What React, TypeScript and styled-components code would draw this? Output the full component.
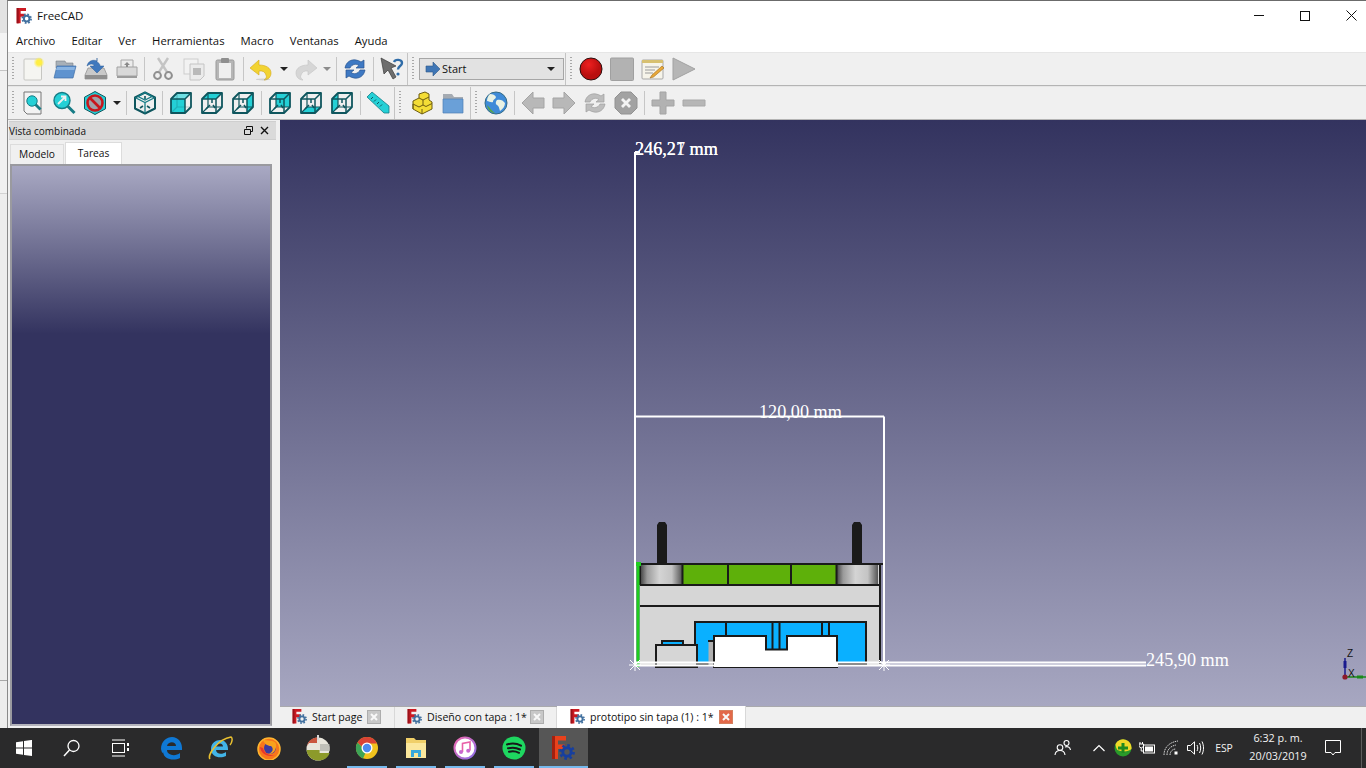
import React from "react";
import styled, { createGlobalStyle } from "styled-components";

const Global = createGlobalStyle`
  html, body { margin: 0; padding: 0; background: #f0f0f0; overflow: hidden; }
  * { box-sizing: border-box; }
  svg { flex: none; }
`;
const UI = `"Open Sans", "Noto Sans", "Liberation Sans", sans-serif`;

const Root = styled.div`
  width: 1366px; height: 768px; display: flex; flex-direction: column; overflow: hidden;
  font-family: ${UI}; font-size: 11px; color: #000;
`;
const Desk = styled.div`display: flex; flex: 1; min-height: 0;`;
const Sliver = styled.div`
  width: 7px; flex: none;
  background: linear-gradient(#e3e3e3 0 33px, #f4f4f4 33px 70px, #c4c4c4 70px 71px, #f0f0f0 71px 193px, #d2d2d2 193px 194px, #ededed 194px 680px, #a8a8a8 680px 681px, #ededed 681px);
`;
const Win = styled.div`
  flex: 1; min-width: 0; display: flex; flex-direction: column; background: #fff;
  border-top: 1px solid #6b6b6b; border-left: 1px solid #8a8a8a;
`;
const TitleBar = styled.div`height: 29px; flex: none; display: flex; align-items: center; padding-left: 8px; gap: 5px;`;
const TitleText = styled.span`font-size: 11.5px; color: #111; flex: 1;`;
const WinButtons = styled.div`display: flex; margin-right: -8px; align-self: flex-start;`;
const WinButton = styled.div`width: 46px; height: 29px; display: flex; align-items: center; justify-content: center;`;
const MenuBar = styled.div`
  height: 22px; flex: none; display: flex; align-items: center; gap: 16px; padding: 0 0 2px 8px;
  font-size: 11.3px; color: #111;
`;
const ToolRow = styled.div`
  height: 34px; flex: none; display: flex; align-items: stretch; background: #f0f0f0;
  border-top: 1px solid #e6e6e6; border-bottom: 1px solid #b4b4b4;
`;
const ToolGroup = styled.div<{ $end?: boolean; $pad?: number }>`
  display: flex; align-items: center; padding-right: ${p => p.$pad ?? 0}px;
  ${p => p.$end ? "border-right: 1px solid #c4c4c4;" : ""}
`;
const Handle = styled.div<{ $w?: number }>`
  width: ${p => p.$w ?? 10}px; height: 24px; flex: none;
  background: repeating-linear-gradient(#a8a8a8 0 1px, transparent 1px 3px) center / 2px 100% no-repeat;
`;
const Tool = styled.div<{ $w?: number }>`
  width: ${p => p.$w ?? 31}px; height: 26px; flex: none; display: flex; align-items: center; justify-content: center;
`;
const Sep = styled.div<{ $w?: number }>`
  width: ${p => p.$w ?? 6}px; height: 24px; flex: none; position: relative; display: flex; justify-content: center;
  &::after { content: ""; width: 1px; height: 100%; background: #c6c6c6; }
`;
const Caret = styled.div<{ $off?: boolean }>`
  width: 0; height: 0; border-left: 4px solid transparent; border-right: 4px solid transparent;
  border-top: 4px solid ${p => p.$off ? "#8c8c8c" : "#222"};
`;
const Combo = styled.div`
  width: 145px; height: 22px; flex: none; margin: 0 1px; background: #e2e2e2; border: 1px solid #a6a6a6;
  display: flex; align-items: center; padding: 0 8px 1px 5px; gap: 1px; font-size: 11px; color: #111;
`;
const ComboLabel = styled.span`flex: 1;`;
const Main = styled.div`flex: 1; min-height: 0; display: flex;`;
const Panel = styled.div`width: 272px; flex: none; display: flex; flex-direction: column; background: #f0f0f0;`;
const DockTitle = styled.div`
  height: 19px; flex: none; margin: 1px 4px 0 1px; background: #dadada; border-top: 1px solid #cfcfcf; border-bottom: 1px solid #cfcfcf;
  display: flex; align-items: center; font-size: 10px; color: #111; padding-right: 4px;
`;
const DockLabel = styled.span`flex: 1;`;
const DockIcon = styled.div`width: 16px; height: 14px; display: flex; align-items: center; justify-content: center;`;
const PanelTabs = styled.div`height: 22px; flex: none; margin: 2px 8px 0 2px; display: flex; align-items: flex-end;`;
const PanelTab = styled.div<{ $on?: boolean }>`
  height: ${p => p.$on ? 22 : 20}px; width: ${p => p.$on ? 57 : 54}px; display: flex; align-items: center; justify-content: center;
  background: ${p => p.$on ? "#fff" : "#f0f0f0"}; font-size: 10.2px; color: #111; padding-bottom: 2px;
  margin-left: ${p => p.$on ? 1 : 0}px;
  border: 1px solid #dcdcdc; border-bottom: none;
`;
const TaskPane = styled.div`
  flex: 1; margin: 0 8px 2px 2px; border: 2px solid #9a9a9f; border-bottom-color: #b4b4bc;
  background: linear-gradient(#a9a9c3 0, #33335f 168px);
`;
const RightCol = styled.div`flex: 1; min-width: 0; display: flex; flex-direction: column;`;
const Viewport = styled.div`
  flex: 1; position: relative; overflow: hidden; background: linear-gradient(#33335f, #a7a7c1);
`;
const Drawing = styled.svg`position: absolute; left: 0; top: 0;`;
const Dim = styled.span<{ $x: number; $y: number }>`
  position: absolute; left: ${p => p.$x - 280}px; top: ${p => p.$y - 120}px; white-space: nowrap;
  font-family: "Liberation Serif", serif; font-size: 18.2px; line-height: 20px; color: #fff;
`;
const AxisLetter = styled.span<{ $x: number; $y: number }>`
  position: absolute; left: ${p => p.$x - 280}px; top: ${p => p.$y - 120}px;
  font-family: "Liberation Sans", sans-serif; font-size: 10px; line-height: 10px; color: #111;
`;
const DocTabs = styled.div`
  height: 22px; flex: none; display: flex; padding-left: 2px; background: #f0f0f0; border-top: 1px solid #a9a9ad;
`;
const DocTab = styled.div<{ $w: number; $pl: number; $on?: boolean }>`
  width: ${p => p.$w}px; display: flex; align-items: center; gap: 5px; padding: 0 0 ${p => p.$on ? 1 : 2}px ${p => p.$pl}px;
  margin-top: ${p => p.$on ? -1 : 0}px; font-size: 10.6px; color: #111;
  background: ${p => p.$on ? "#fff" : "#f0f0f0"}; border-right: 1px solid #d8d8d8;
`;
const DocLabel = styled.span`white-space: nowrap; flex: 1; min-width: 0;`;
const DocClose = styled.div<{ $on?: boolean; $mr: number }>`
  width: 14px; height: 14px; flex: none; margin-right: ${p => p.$mr}px;
  display: flex; align-items: center; justify-content: center;
  background: ${p => p.$on ? "#e2694a" : "#c8c8c8"}; border: 1px solid ${p => p.$on ? "#d6805f" : "#adadad"};
`;
const Taskbar = styled.div`height: 40px; flex: none; display: flex; background: #2a2a2b; color: #f2f2f2;`;
const TaskBtn = styled.div<{ $w?: number; $active?: boolean; $bar?: number }>`
  width: ${p => p.$w ?? 49}px; height: 40px; flex: none; display: flex; align-items: center; justify-content: center; position: relative;
  background: ${p => p.$active ? "#565656" : "transparent"};
  ${p => p.$bar ? `&::after { content: ""; position: absolute; bottom: 0; left: ${(49 - p.$bar) / 2}px; width: ${p.$bar}px; height: 2px; background: #76b9ed; }` : ""}
`;
const TaskGap = styled.div`width: 2.5px; flex: none;`;
const Tray = styled.div`margin-left: auto; display: flex; align-items: center; height: 40px;`;
const TrayItem = styled.div<{ $w?: number }>`
  width: ${p => p.$w ?? 24}px; height: 40px; flex: none; display: flex; align-items: center; justify-content: center;
`;
const TraySpace = styled.div`width: 12px;`;
const Lang = styled(TrayItem)`font-size: 10.4px;`;
const Clock = styled(TrayItem)`flex-direction: column; font-size: 10.8px; line-height: 18px; padding-bottom: 2px;`;
const DesktopEdge = styled.div`width: 5px; height: 40px; margin-left: 10px; border-left: 1px solid #5c5c5c;`;

type IconProps = { s?: number; children: React.ReactNode };
const I = ({ s = 24, children }: IconProps) => (
  <svg width={s} height={s} viewBox="0 0 24 24" fill="none">{children}</svg>
);

const Logo = ({ s = 16, hot }: { s?: number; hot?: boolean }) => {
  const gear = hot ? "#173f9e" : "#41709f";
  return (
    <I s={s}>
      <path d="M1 0h14v4.500H7v4h7V13H7v10H1z" fill={hot ? "#e8421c" : "#cc1a22"} />
      <path d="M1 0h3v23H1z" fill={hot ? "#a3200f" : "#98121a"} />
      <circle cx="16" cy="16" r="4.200" stroke={gear} strokeWidth="3" />
      <circle cx="16" cy="16" r="6.600" stroke={gear} strokeWidth="2.600" strokeDasharray="2.600 2.600" />
    </I>
  );
};

const NewDoc = () => (
  <I>
    <defs><radialGradient id="glow"><stop offset=".45" stopColor="#ffee44" /><stop offset="1" stopColor="#ffee44" stopOpacity="0" /></radialGradient></defs>
    <rect x="2" y="2" width="17.500" height="21" rx="1" fill="#f5f5f1" stroke="#c6c6c2" />
    <circle cx="17" cy="5.500" r="5.500" fill="url(#glow)" />
  </I>
);
const OpenFolder = () => (
  <I>
    <path d="M3 4h9l1 2h7v5H3z" fill="#a8b0b8" stroke="#7a8088" strokeWidth=".6" />
    <path d="M4 9h19l-3 12H1z" fill="#5f93cf" stroke="#3f6ea6" strokeWidth=".7" />
    <path d="M4 10h18l-.6 3H3z" fill="#8ab4e2" />
  </I>
);
const SaveDisk = () => (
  <I>
    <path d="M4 11h16l3 7v4H1v-4z" fill="#c9c9c9" stroke="#8b8b8b" strokeWidth=".7" />
    <path d="M1 18h22v4H1z" fill="#8f8f8f" />
    <path d="M3 9c1-5 6-7 10-5v-3l0 0 0 4c2 1 3 2 3 4h4l-7 7-7-7h4c0-2-3-3-7 0z" fill="#3f78bd" stroke="#2c5c98" strokeWidth=".5" />
  </I>
);
const Printer = () => (
  <I>
    <path d="M6 3h12v8H6z" fill="#ececec" stroke="#a8a8a8" />
    <path d="M2 10h20v9H2z" fill="#d9d9d9" stroke="#a2a2a2" />
    <path d="M2 19h20v2H2z" fill="#9c9c9c" />
    <path d="M12 5l3 3h-2v2h-2V8H9z" fill="#8a8a8a" />
  </I>
);
const Cut = () => (
  <I>
    <path d="M7 1l9 14M17 1L8 15" stroke="#c4c4c4" strokeWidth="2.400" />
    <circle cx="6.500" cy="18.500" r="3.400" stroke="#8f8f8f" strokeWidth="2" />
    <circle cx="17.500" cy="18.500" r="3.400" stroke="#8f8f8f" strokeWidth="2" />
  </I>
);
const Copy = () => (
  <I>
    <rect x="2" y="2" width="14" height="15" fill="#f2f2f2" stroke="#cdcdcd" />
    <path d="M8 7h14v12l-4 4H8z" fill="#ebebeb" stroke="#c4c4c4" />
    <rect x="11" y="11" width="8" height="7" fill="#b9b9b9" />
  </I>
);
const Paste = () => (
  <I>
    <rect x="3" y="3" width="18" height="20" rx="1.500" fill="#b6b6b6" stroke="#9a9a9a" />
    <rect x="6" y="6" width="12" height="15" fill="#efefef" />
    <rect x="8" y="1" width="8" height="5" rx="1" fill="#8f8f8f" />
  </I>
);
const Undo = () => (
  <I>
    <path d="M10 3L1 11l9 7v-4c4-.5 6 1 7 4 1 2 0 4-2 5 4 0 7-3 7-7 0-5-5-8-12-8z" fill="#f2d332" stroke="#d4a818" strokeWidth=".6" />
    <ellipse cx="14" cy="22.400" rx="7" ry="1" fill="#999" opacity=".35" />
  </I>
);
const Redo = () => (
  <svg width="24" height="24" viewBox="0 0 24 24" fill="none">
    <g transform="translate(24 0) scale(-1 1)">
      <path d="M10 3L1 11l9 7v-4c4-.5 6 1 7 4 1 2 0 4-2 5 4 0 7-3 7-7 0-5-5-8-12-8z" fill="#d6d6d6" stroke="#c2c2c2" strokeWidth=".6" />
    </g>
  </svg>
);
const Refresh = ({ off }: { off?: boolean }) => {
  const a = off ? "#bdbdbd" : "#3e79c3";
  const e = off ? "#9d9d9d" : "#28558f";
  return (
    <I>
      <path d="M2 11C3 5 8 2 13 3c2 .3 3.500 1 5 2l3-2v8h-8l3-2.500c-3-2-7-1.500-9 2.500z" fill={a} stroke={e} strokeWidth=".7" />
      <path d="M22 13c-1 6-6 9-11 8-2-.3-3.500-1-5-2l-3 2v-8h8l-3 2.500c3 2 7 1.500 9-2.500z" fill={a} stroke={e} strokeWidth=".7" />
    </I>
  );
};
const WhatsThis = () => (
  <I>
    <path d="M1 1l15 8-5 2 5 9-3 2-5-9-4 4z" fill="#6d6d6d" stroke="#3b3b3b" strokeWidth=".7" />
    <path d="M14 5c1-3 8-3 8 1 0 3-4 3-4 6.500" stroke="#2f6ca8" strokeWidth="2.400" />
    <circle cx="18" cy="17" r="1.600" fill="#2f6ca8" />
  </I>
);
const StartArrow = () => (
  <svg width="16" height="14" viewBox="0 0 16 14"><path d="M1 4h7V0l7 7-7 7v-4H1z" fill="#3f76b5" stroke="#2d5787" strokeWidth=".6" /></svg>
);
const Record = () => (
  <I>
    <defs><radialGradient id="rec" cx=".4" cy=".3"><stop offset="0" stopColor="#ee2020" /><stop offset="1" stopColor="#b90f0f" /></radialGradient></defs>
    <circle cx="12" cy="12" r="11" fill="url(#rec)" stroke="#2a1010" />
  </I>
);
const Stop = () => <I><rect x=".5" y="1" width="23" height="22.500" rx="1" fill="#b2b2b2" stroke="#a0a0a0" /></I>;
const MacroNote = () => (
  <I>
    <rect x="1" y="3" width="21" height="19" rx="1" fill="#f6f4ea" stroke="#a8a8a8" />
    <path d="M1 3h21v3H1z" fill="#d7c070" />
    <path d="M4 10h14M4 13h10M4 16h8" stroke="#9a9a9a" />
    <path d="M21 9L11 18l-2 3 3.500-1L23 11z" fill="#e8a838" stroke="#a06a18" strokeWidth=".6" />
  </I>
);
const Play = () => <I><path d="M1 1l22 11L1 23z" fill="#b6b6b6" stroke="#a2a2a2" /></I>;

const teal = "#24d0d6"; const dark = "#0f565e";
const FitAll = () => (
  <I>
    <path d="M3 1h17v22H6l-3-3z" fill="#f3f3f3" stroke="#777" />
    <circle cx="11" cy="10" r="5.200" fill={teal} stroke="#167c86" />
    <path d="M14.500 13.500l5 5" stroke="#167c86" strokeWidth="2.800" />
  </I>
);
const FitSel = () => (
  <I>
    <circle cx="10" cy="9.500" r="8" fill={teal} stroke="#167c86" strokeWidth="1.400" />
    <path d="M6 13l7-7M9 5.500h4.500V10" stroke="#efefef" strokeWidth="1.800" />
    <path d="M15.500 15l7 7" stroke="#167c86" strokeWidth="3" />
  </I>
);
const NoDraw = () => (
  <I>
    <path d="M12 .5l10.500 5.700v11.600L12 23.500 1.500 17.800V6.200z" fill={teal} stroke={dark} />
    <circle cx="12" cy="12" r="7.500" fill="#9fa2a8" stroke="#c8161c" strokeWidth="2.600" />
    <path d="M7 7l10 10" stroke="#c8161c" strokeWidth="2.600" />
  </I>
);
const front = "M2 8h14v14H2z", topF = "M2 8l6-6h14l-6 6z", rightF = "M16 8l6-6v14l-6 6z";
const backF = "M8 2h14v14H8z", botF = "M2 22l6-6h14l-6 6z", leftF = "M2 8l6-6v14l-6 6z";
type CubeFace = "front" | "top" | "right" | "rear" | "bottom" | "left";
const Cube = ({ face }: { face: CubeFace }) => {
  const d = { front, top: topF, right: rightF, rear: backF, bottom: botF, left: leftF }[face];
  const solidFront = face === "front";
  return (
    <I>
      <path d={d} fill={teal} />
      {solidFront && <path d={topF} fill="#6fe0e4" />}
      <path d="M2 8l6-6h14v14l-6 6H2z" stroke={dark} strokeWidth="1.800" strokeLinejoin="round" />
      <path d="M2 8h14v14M16 8l6-6" stroke={dark} strokeWidth="1.500" />
      <path d="M8 2v14h14M8 16l-6 6" stroke={dark} strokeWidth="1.200" opacity={solidFront ? .25 : 1} />
      {!solidFront && <path d="M6 18l4-4M13 14l2 3M12 8v4" stroke={dark} strokeWidth="1.500" />}
    </I>
  );
};
const IsoCube = () => (
  <I>
    <path d="M12 1.500l10 5v11l-10 5-10-5v-11z" stroke={dark} strokeWidth="2" strokeLinejoin="round" />
    <path d="M2 6.500l10 5 10-5M12 11.500v11M12 1.500l-7 4 7 3.500 7-3.500z" stroke="#167c86" strokeWidth="1.300" />
    <path d="M7 17l3-2M17 17l-3-2M12 5v3" stroke={dark} strokeWidth="1.600" />
  </I>
);
const Measure = () => (
  <I>
    <path d="M1 6l5-5 17 14v7l-5 0z" fill={teal} stroke="#167c86" strokeWidth=".8" />
    <path d="M7 6l-2 2M10 8.500l-2 2M13 11l-2 2M16 13.500l-2 2" stroke="#0f565e" />
  </I>
);
const PartBlocks = () => (
  <I>
    <path d="M3 10l6-3V3l6-2 4 2v6l3 2v7l-10 5-9-5z" fill="#f4dd36" stroke="#6d5c10" strokeWidth="1" strokeLinejoin="round" />
    <path d="M9 7l4 2 6-3M13 9v5l-4 2-6-3M13 14l3 1.500 6-3M12 23v-5M3 13v5" stroke="#6d5c10" strokeWidth="1" />
  </I>
);
const BlueFolder = () => (
  <I>
    <path d="M2 3h9l2 3h9v16H2z" fill="#a5abb2" />
    <path d="M2 8h20v14H2z" fill="#6aa0d8" stroke="#4f7fb4" strokeWidth=".7" />
  </I>
);
const Globe = () => (
  <I>
    <circle cx="12" cy="12" r="11" fill="#3f8bd8" stroke="#346b84" />
    <path d="M6 3c3 0 5 1 6 3-1 3-3 2-3 5-2 1-4-1-6-1 0-3 1-5 3-7zM13 9c3-1 6 0 8 3 0 3-2 6-5 8-1-3-1-5-3-6-2-1-1-4 0-5z" fill="#e9f2e4" />
    <path d="M3 14c3 3 4 5 8 8-4 0-7-3-8-8z" fill="#58a844" />
  </I>
);
const ArrowGrey = ({ flip }: { flip?: boolean }) => (
  <I>
    <path d={flip ? "M23 12L12 1v6H1v10h11v6z" : "M1 12L12 1v6h11v10H12v6z"} fill="#b8b8b8" stroke="#a4a4a4" />
  </I>
);
const StopOct = () => (
  <I>
    <path d="M7 1h10l6 6v10l-6 6H7l-6-6V7z" fill="#a2a2a2" stroke="#929292" />
    <path d="M8 8l8 8M16 8l-8 8" stroke="#f4f4f4" strokeWidth="2.800" />
  </I>
);
const Plus = () => <I><path d="M9 1h6v8h8v6h-8v8H9v-8H1V9h8z" fill="#b2b2b2" stroke="#a4a4a4" /></I>;
const Minus = () => <I><path d="M1 9h22v6H1z" fill="#b6b6b6" stroke="#a8a8a8" /></I>;

const SmallX = ({ c = "#f8f8f8" }: { c?: string }) => (
  <svg width="8" height="8" viewBox="0 0 8 8"><path d="M1 1l6 6M7 1L1 7" stroke={c} strokeWidth="2" /></svg>
);

const Windows = () => (
  <svg width="16" height="16" viewBox="0 0 16 16"><path d="M0 2.200L7 1.200v6.300H0zM8 1l8-1.100v7.600H8zM0 8.500h7v6.300l-7-1zM8 8.500h8V16l-8-1.100z" fill="#fff" /></svg>
);
const Search = () => (
  <svg width="18" height="18" viewBox="0 0 18 18" fill="none"><circle cx="10.500" cy="7" r="5.500" stroke="#fff" strokeWidth="1.300" /><path d="M6.500 11L1 17" stroke="#fff" strokeWidth="1.500" /></svg>
);
const TaskView = () => (
  <svg width="18" height="18" viewBox="0 0 18 18" fill="none">
    <path d="M1 1h13M1 17h13" stroke="#fff" /><rect x="1.500" y="4.500" width="12" height="9" stroke="#fff" />
    <path d="M16 4h2v3h-2zM16 9h2v3h-2z" fill="#fff" />
  </svg>
);
const Edge = () => (
  <svg width="24" height="24" viewBox="0 0 24 24"><path d="M2 13C2 5 8 1 13 1c6 0 10 5 10 11v2H8c0 5 8 7 13 3v5c-6 3-16 2-17-6-.5 2-1 1-2-3zM8 10h9c0-5-8-5-9 0z" fill="#0f78d4" /></svg>
);
const IE = () => (
  <svg width="26" height="26" viewBox="0 0 26 26" fill="none">
    <path d="M4 14c0-6 5-9 9-9 5 0 8 4 8 9v1H9c0 4 6 5 10 2v4c-6 3-15 1-15-7zM9 11.500h7c0-4-6-4-7 0z" fill="#42b4e8" />
    <path d="M3 24C0 20 11 4 24 2c2 1 1 6-1 8" stroke="#e9c030" strokeWidth="1.500" />
  </svg>
);
const Firefox = () => (
  <svg width="24" height="24" viewBox="0 0 24 24">
    <circle cx="12" cy="13" r="11" fill="#f7761c" />
    <circle cx="12" cy="13" r="11" fill="none" stroke="#ffb52e" strokeWidth="1.500" />
    <circle cx="13" cy="12" r="6" fill="#3d3b9f" />
    <path d="M5 3c3 3 13 0 14 5 1 4-2 11-8 10 5-1 6-6 3-8-4 0-6-2-9-7z" fill="#f8a21c" />
    <path d="M3 11c1 7 8 11 15 8-6 1-11-2-12-7z" fill="#e8392c" />
  </svg>
);
const SketchBall = () => (
  <svg width="24" height="26" viewBox="0 0 24 26">
    <circle cx="12" cy="14" r="11.500" fill="#e8e6dc" />
    <path d="M.6 15h13v3h10c-1.500 5-6 7.500-11.600 7.500C6 25.500 1 21 .6 15z" fill="#8c9a2a" />
    <path d="M14 9h9.300c.4 2 .4 5 .2 7H14z" fill="#c0c0b8" />
    <path d="M1 11C2 6 6 3 11 2.500V8H3z" fill="#c43c22" opacity=".85" />
    <rect x="11" y="0" width="2" height="5" fill="#d8d8d8" />
  </svg>
);
const Chrome = () => (
  <svg width="24" height="24" viewBox="0 0 24 24">
    <circle cx="12" cy="12" r="11" fill="#f1c21d" />
    <path d="M2.500 6.500A11 11 0 0 1 22 7.500H12a5 5 0 0 0-5 3.500z" fill="#d94335" />
    <path d="M2.500 6.500L7 11a5 5 0 0 0 3.500 5.800L8 22.500A11 11 0 0 1 2.500 6.500z" fill="#3da457" />
    <circle cx="12" cy="12" r="5.500" fill="#fff" /><circle cx="12" cy="12" r="4.200" fill="#4b8bf0" />
  </svg>
);
const Explorer = () => (
  <svg width="24" height="24" viewBox="0 0 24 24">
    <path d="M2 2h8l2 2h10v18H2z" fill="#f0cf68" />
    <path d="M2 7h20v15H2z" fill="#fbe79c" />
    <path d="M7 14h10v7H7z" fill="#38a8dc" /><path d="M10 17h4v5h-4z" fill="#fbe79c" />
  </svg>
);
const Itunes = () => (
  <svg width="24" height="24" viewBox="0 0 24 24">
    <defs><linearGradient id="itn" x1="0" y1="0" x2="1" y2="1"><stop offset="0" stopColor="#f06ab0" /><stop offset="1" stopColor="#8a6fe8" /></linearGradient></defs>
    <circle cx="12" cy="12" r="10.500" fill="#fff" stroke="url(#itn)" strokeWidth="2" />
    <path d="M9.500 16V7.500L17 6v8.500" stroke="#e860a8" strokeWidth="1.600" fill="none" />
    <circle cx="8" cy="16" r="2" fill="#c868d0" /><circle cx="15.200" cy="14.700" r="2" fill="#c868d0" />
  </svg>
);
const Spotify = () => (
  <svg width="24" height="24" viewBox="0 0 24 24" fill="none">
    <circle cx="12" cy="12" r="11.500" fill="#1ed760" />
    <path d="M5 8.500c5-1.500 10-1 14 1.200M6 12.300c4-1 8.500-.7 12 1.200M7 15.800c3.500-.8 7-.5 10 1" stroke="#17181a" strokeWidth="2" strokeLinecap="round" />
  </svg>
);
const People = () => (
  <svg width="18" height="18" viewBox="0 0 18 18" fill="none" stroke="#fff" strokeWidth="1.100">
    <circle cx="6" cy="8.500" r="2.800" /><path d="M1 16c.3-3 2.300-4.500 5-4.500s4.700 1.500 5 4.500" />
    <circle cx="12.500" cy="4" r="2.500" /><path d="M11 8c2.500-1 5 0 5.500 3" />
  </svg>
);
const Chevron = () => (
  <svg width="12" height="8" viewBox="0 0 12 8" fill="none"><path d="M.5 7L6 1.500 11.500 7" stroke="#fff" strokeWidth="1.200" /></svg>
);
const GreenPlus = () => (
  <svg width="18" height="18" viewBox="0 0 18 18">
    <circle cx="9" cy="9" r="8.500" fill="#2a9a2a" /><path d="M1.500 5a8.500 8.500 0 0 1 16 5c-3 3-10 3-14 1-1-1-2-4-2-6z" fill="#f0d828" />
    <path d="M7.500 4h3v3.500H14v3h-3.500V14h-3v-3.500H4v-3h3.500z" fill="#1f8a1f" />
  </svg>
);
const Battery = () => (
  <svg width="17" height="12" viewBox="0 0 17 12" fill="none">
    <path d="M1 0v2M3.500 0v2M0 2h4.500v2.500L2.200 6 0 4.500z" stroke="#fff" /><path d="M2.200 6v3h2" stroke="#fff" />
    <rect x="4.500" y="3" width="11" height="8" stroke="#fff" /><rect x="6" y="4.500" width="8" height="5" fill="#fff" />
  </svg>
);
const Wifi = () => (
  <svg width="16" height="16" viewBox="0 0 16 16" fill="none" stroke="#d8d8d8">
    <path d="M1 15C1 7 7 2 15 1M4 15c0-6 4-9 9-10M7 15c0-3 2-6 6-6" strokeDasharray="1.500 .8" />
    <rect x="11.500" y="11.500" width="3" height="3" fill="#fff" stroke="none" />
  </svg>
);
const Volume = () => (
  <svg width="17" height="14" viewBox="0 0 17 14" fill="none" stroke="#fff">
    <path d="M.5 4.500h3L7.500.8v12.400L3.500 9.500h-3z" /><path d="M10 4c1 2 1 4 0 6M12.500 2c1.600 3 1.600 7 0 10M15 .5c2 4 2 9 0 13" />
  </svg>
);
const Notify = () => (
  <svg width="16" height="16" viewBox="0 0 16 16" fill="none"><path d="M.5.5h15v12H10L8 15l-2-2.500H.5z" stroke="#fff" /></svg>
);

const Model = () => (
  <Drawing width="1086" height="586" viewBox="280 120 1086 586">
    <defs>
      <linearGradient id="cyl">
        <stop offset="0" stopColor="#4a4a4a" /><stop offset=".15" stopColor="#9a9a9a" /><stop offset=".45" stopColor="#d4d4d4" />
        <stop offset=".75" stopColor="#c4c4c4" /><stop offset="1" stopColor="#555" />
      </linearGradient>
    </defs>
    <path d="M657 563v-38l2-3h6l2 3v38zM852 563v-38l2-3h6l2 3v38z" fill="#1a1a1a" />
    <rect x="640" y="564" width="241" height="102" fill="#d6d6d6" />
    <rect x="641" y="565" width="41" height="19" fill="url(#cyl)" />
    <rect x="837" y="565" width="41" height="19" fill="url(#cyl)" />
    <rect x="683" y="565" width="153" height="19" fill="#5eb00a" />
    <path d="M640 564h243M728 564v20M791 564v20M682.500 564v20M836.500 564v20M640 585h241M640 606h241M880 564v100M640 564v21" stroke="#1a1a1a" strokeWidth="2" />
    <path d="M695 664v-42h171v42z" fill="#0ab0ff" stroke="#1a1a1a" strokeWidth="2" />
    <path d="M726 622v14M772.500 622v28M779.500 622v28M822 622v14M829 622v14" stroke="#1a1a1a" strokeWidth="2" />
    <rect x="662" y="641" width="21" height="5" fill="#0ab0ff" stroke="#1a1a1a" strokeWidth="2" />
    <rect x="656" y="645" width="41" height="22" fill="#d6d6d6" stroke="#1a1a1a" strokeWidth="2" />
    <rect x="708.500" y="641" width="5" height="25" fill="#b0b0b0" />
    <path d="M708 641h6" stroke="#1a1a1a" strokeWidth="2" />
    <path d="M714 667V636h52v13.500h21V636h50v31z" fill="#fff" stroke="#1a1a1a" strokeWidth="2" />
    <path d="M638 565v102" stroke="#1fce1f" strokeWidth="3" />
    <rect x="636" y="562" width="5" height="4" fill="#1fce1f" />
    <path d="M635 152v513M635 152h5M635 416.500h249M884 416.500v249" stroke="#fff" strokeWidth="2" />
    <path d="M635 662.500h511M635 665.500h511" stroke="#fff" strokeWidth="2" />
    <rect x="714" y="662" width="124" height="5" fill="#fff" />
    <path d="M630 660l10 10M640 660l-10 10M635 659v12M629 665h12M879 660l10 10M889 660l-10 10M884 659v12M878 665h12" stroke="#fff" strokeWidth="1" />
    <path d="M1345 677v-19" stroke="#1a1a8e" strokeWidth="1.500" /><rect x="1343.500" y="661" width="3" height="7" fill="#1a1a8e" />
    <path d="M1345 677h21" stroke="#1a8a1a" strokeWidth="1.500" /><rect x="1357" y="675.500" width="6" height="3" fill="#1a8a1a" />
    <circle cx="1345" cy="677" r="2.600" fill="#8e1a2a" />
  </Drawing>
);

const App = () => (
  <Root>
    <Global />
    <Desk>
      <Sliver />
      <Win>
        <TitleBar>
          <Logo s={16} />
          <TitleText>FreeCAD</TitleText>
          <WinButtons>
            <WinButton><svg width="10" height="2"><rect width="10" height="1" fill="#111" /></svg></WinButton>
            <WinButton><svg width="10" height="10" fill="none"><rect x=".5" y=".5" width="9" height="9" stroke="#111" /></svg></WinButton>
            <WinButton><svg width="11" height="11" fill="none"><path d="M.5.500l10 10M10.500.5l-10 10" stroke="#111" /></svg></WinButton>
          </WinButtons>
        </TitleBar>
        <MenuBar>
          {["Archivo", "Editar", "Ver", "Herramientas", "Macro", "Ventanas", "Ayuda"].map(m => <span key={m}>{m}</span>)}
        </MenuBar>
        <ToolRow>
          <ToolGroup $end>
            <Handle />
            <Tool><NewDoc /></Tool><Tool><OpenFolder /></Tool><Tool><SaveDisk /></Tool><Tool><Printer /></Tool>
            <Sep $w={5.5} />
            <Tool><Cut /></Tool><Tool><Copy /></Tool><Tool><Paste /></Tool>
            <Sep $w={5} />
            <Tool><Undo /></Tool><Tool $w={14}><Caret /></Tool>
            <Tool><Redo /></Tool><Tool $w={11.5}><Caret $off /></Tool>
            <Sep />
            <Tool><Refresh /></Tool>
            <Sep />
            <Tool><WhatsThis /></Tool>
          </ToolGroup>
          <ToolGroup $end>
            <Handle />
            <Combo><StartArrow /><ComboLabel>Start</ComboLabel><Caret /></Combo>
          </ToolGroup>
          <ToolGroup>
            <Handle $w={9} />
            <Tool><Record /></Tool><Tool><Stop /></Tool><Tool><MacroNote /></Tool><Tool><Play /></Tool>
          </ToolGroup>
        </ToolRow>
        <ToolRow>
          <ToolGroup $end>
            <Handle $w={9} />
            <Tool><FitAll /></Tool><Tool><FitSel /></Tool><Tool><NoDraw /></Tool><Tool $w={13}><Caret /></Tool>
            <Sep />
            <Tool><IsoCube /></Tool>
            <Sep $w={5.5} />
            <Tool><Cube face="front" /></Tool><Tool><Cube face="top" /></Tool><Tool><Cube face="right" /></Tool>
            <Sep />
            <Tool><Cube face="rear" /></Tool><Tool><Cube face="bottom" /></Tool><Tool><Cube face="left" /></Tool>
            <Sep $w={5} />
            <Tool><Measure /></Tool>
          </ToolGroup>
          <ToolGroup $end $pad={2}>
            <Handle $w={11.5} />
            <Tool><PartBlocks /></Tool><Tool><BlueFolder /></Tool>
          </ToolGroup>
          <ToolGroup>
            <Handle $w={9} />
            <Tool><Globe /></Tool>
            <Sep />
            <Tool><ArrowGrey /></Tool><Tool><ArrowGrey flip /></Tool><Tool><Refresh off /></Tool><Tool><StopOct /></Tool>
            <Sep />
            <Tool><Plus /></Tool><Tool><Minus /></Tool>
          </ToolGroup>
        </ToolRow>
        <Main>
          <Panel>
            <DockTitle>
              <DockLabel>Vista combinada</DockLabel>
              <DockIcon><svg width="9" height="9" fill="none"><path d="M2.500 2.500v-2h6v5h-2M.5 3.500h6v5h-6z" stroke="#111" /></svg></DockIcon>
              <DockIcon><svg width="9" height="9" fill="none"><path d="M1 1l7 7M8 1L1 8" stroke="#111" strokeWidth="1.400" /></svg></DockIcon>
            </DockTitle>
            <PanelTabs>
              <PanelTab>Modelo</PanelTab>
              <PanelTab $on>Tareas</PanelTab>
            </PanelTabs>
            <TaskPane />
          </Panel>
          <RightCol>
            <Viewport>
              <Dim $x={635} $y={139}>246,21 mm</Dim>
              <Dim $x={635} $y={139}>246,27 mm</Dim>
              <Dim $x={759} $y={402}>120,00 mm</Dim>
              <Dim $x={1146} $y={650}>245,90 mm</Dim>
              <Model />
              <AxisLetter $x={1347} $y={649}>Z</AxisLetter>
              <AxisLetter $x={1348} $y={669}>X</AxisLetter>
            </Viewport>
            <DocTabs>
              <DocTab $w={113} $pl={10}><Logo s={15} /><DocLabel>Start page</DocLabel><DocClose $mr={13}><SmallX /></DocClose></DocTab>
              <DocTab $w={162} $pl={12}><Logo s={15} /><DocLabel>Diseño con tapa : 1*</DocLabel><DocClose $mr={12}><SmallX /></DocClose></DocTab>
              <DocTab $w={189} $pl={13} $on><Logo s={15} /><DocLabel>prototipo sin tapa (1) : 1*</DocLabel><DocClose $on $mr={12}><SmallX /></DocClose></DocTab>
            </DocTabs>
          </RightCol>
        </Main>
      </Win>
    </Desk>
    <Taskbar>
      <TaskBtn $w={48}><Windows /></TaskBtn>
      <TaskBtn $w={48}><Search /></TaskBtn>
      <TaskBtn $w={48}><TaskView /></TaskBtn>
      <TaskGap />
      <TaskBtn><Edge /></TaskBtn>
      <TaskBtn><IE /></TaskBtn>
      <TaskBtn><Firefox /></TaskBtn>
      <TaskBtn><SketchBall /></TaskBtn>
      <TaskBtn $bar={40}><Chrome /></TaskBtn>
      <TaskBtn $bar={40}><Explorer /></TaskBtn>
      <TaskBtn $bar={40}><Itunes /></TaskBtn>
      <TaskBtn $bar={40}><Spotify /></TaskBtn>
      <TaskBtn $active $bar={49}><Logo s={24} hot /></TaskBtn>
      <Tray>
        <TrayItem><People /></TrayItem>
        <TraySpace />
        <TrayItem><Chevron /></TrayItem>
        <TrayItem><GreenPlus /></TrayItem>
        <TrayItem><Battery /></TrayItem>
        <TrayItem><Wifi /></TrayItem>
        <TrayItem><Volume /></TrayItem>
        <Lang $w={34}>ESP</Lang>
        <Clock $w={74}><span>6:32 p. m.</span><span>20/03/2019</span></Clock>
        <TrayItem $w={36}><Notify /></TrayItem>
        <DesktopEdge />
      </Tray>
    </Taskbar>
  </Root>
);

export default App;
